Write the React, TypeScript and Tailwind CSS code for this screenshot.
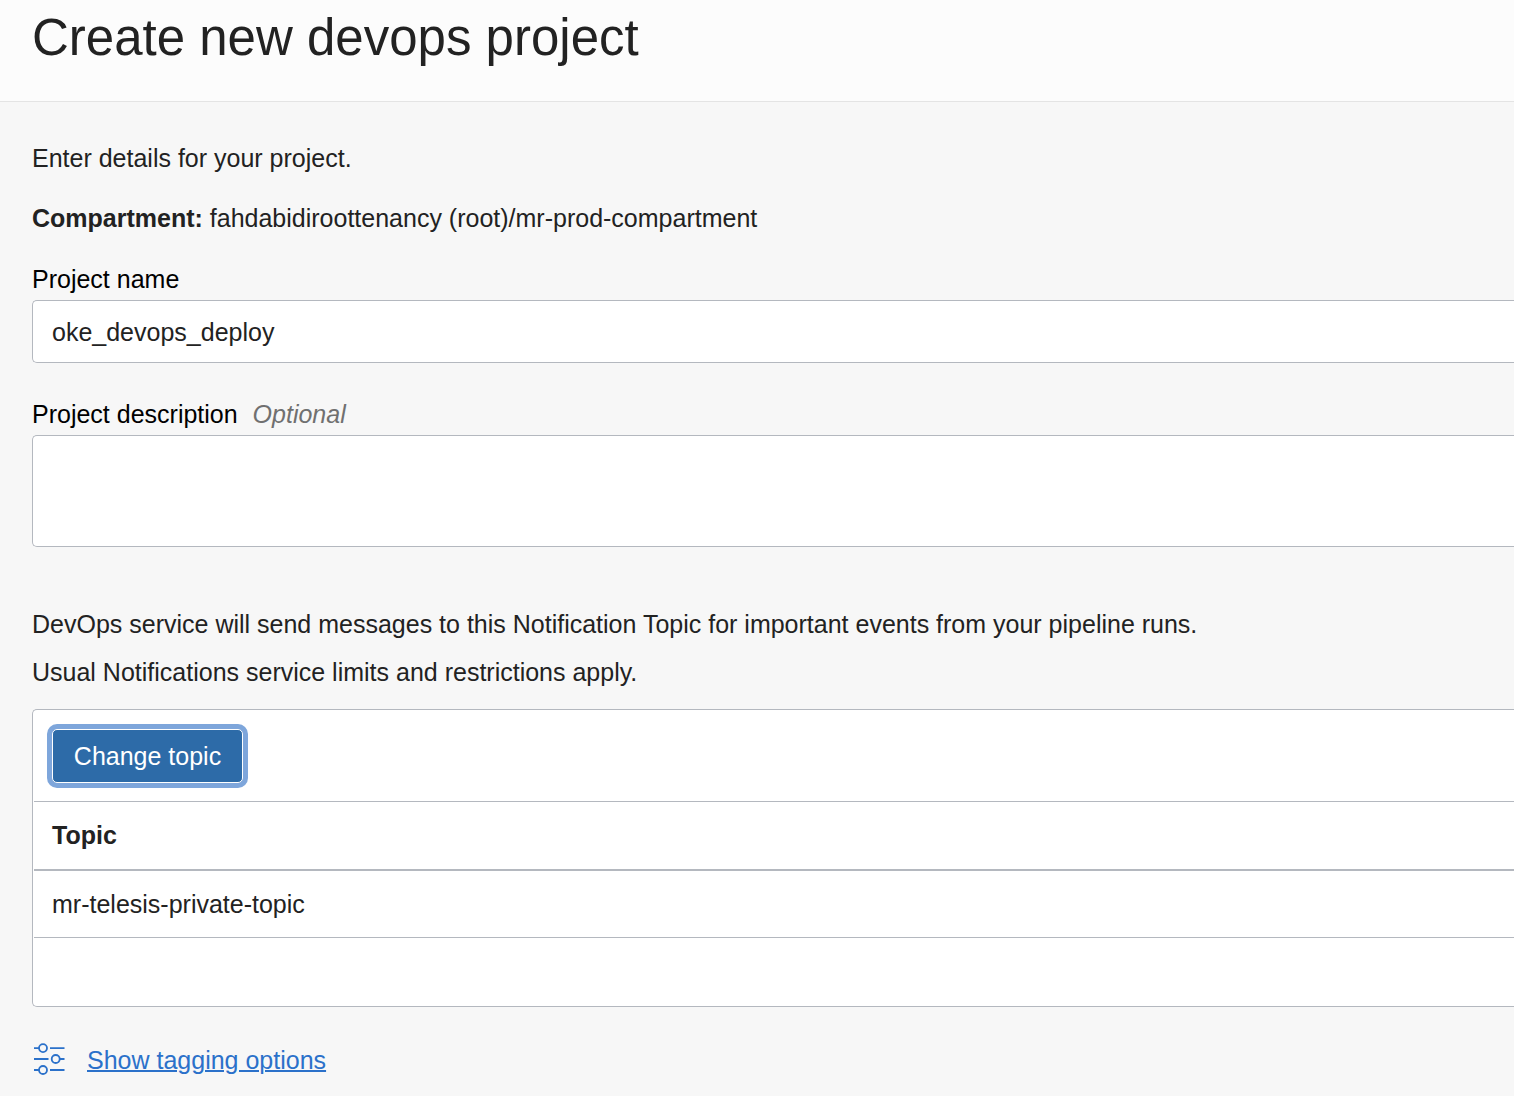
export default function App() {
  return (
    <div className="min-h-screen overflow-x-hidden bg-[#f7f7f7] text-[25px] leading-8 text-[#222222] font-['Liberation_Sans',Arial,sans-serif]">
      <header className="h-[102px] border-b border-[#e4e4e4] bg-[#fcfcfc] pl-8 pt-2">
        <h1 className="text-[51px] leading-[60px]">Create new devops project</h1>
      </header>
      <main className="pl-8">
        <p className="pt-10">Enter details for your project.</p>
        <p className="mt-7">
          <strong>Compartment:</strong> fahdabidiroottenancy (root)/mr-prod-compartment
        </p>
        <div className="mt-[29px]">
          <label htmlFor="name" className="block text-black">Project name</label>
          <input
            id="name"
            defaultValue="oke_devops_deploy"
            className="mt-[5px] block h-[63px] w-full rounded-l-[5px] border border-r-0 border-[#b4b8bf] bg-white px-[19px] pt-[2px] outline-none"
          />
        </div>
        <div className="mt-[35px]">
          <label htmlFor="description" className="block text-black">
            Project description <em className="ml-2 text-[#707070]">Optional</em>
          </label>
          <textarea
            id="description"
            className="mt-[5px] block h-28 w-full resize-none rounded-l-[5px] border border-r-0 border-[#b4b8bf] bg-white px-[19px] py-3 outline-none"
          />
        </div>
        <p className="mt-[53px] leading-12">
          DevOps service will send messages to this Notification Topic for important events from your pipeline runs.
          <br />
          Usual Notifications service limits and restrictions apply.
        </p>
        <section className="mt-[13px] rounded-l-[5px] border border-r-0 border-[#b4b8bf] bg-white pl-px">
          <div className="flex h-[91px] items-center pl-[18px]">
            <button
              type="button"
              className="h-[54px] min-w-[191px] rounded-[5px] border border-white bg-[#2d6ba8] px-[19px] text-white ring-5 ring-[#7ea6db]"
            >
              Change topic
            </button>
          </div>
          <table className="w-full border-collapse text-left">
            <thead>
              <tr className="h-[68px] border-t border-b-2 border-[#b4b8bf]">
                <th className="pl-[18px] font-bold">Topic</th>
              </tr>
            </thead>
            <tbody>
              <tr className="h-[68px] border-b border-[#b4b8bf]">
                <td className="pl-[18px]">mr-telesis-private-topic</td>
              </tr>
            </tbody>
          </table>
          <div className="h-[68px]" />
        </section>
        <div className="mt-9 flex items-center pb-5">
          <svg width="34" height="34" viewBox="0 0 34 34" fill="none" stroke="#2b71ca" strokeWidth="1.8" aria-hidden="true">
            <path d="M2 5.1h5M18 5.1h14.5M2 16h14.5M28 16h4.5M2 27h5M18 27h14.5" />
            <circle cx="11" cy="5.1" r="4" />
            <circle cx="23.7" cy="16" r="4" />
            <circle cx="11" cy="27" r="4" />
          </svg>
          <a href="#tagging" className="ml-[21px] text-[#2b71ca] underline decoration-2">Show tagging options</a>
        </div>
      </main>
    </div>
  );
}
